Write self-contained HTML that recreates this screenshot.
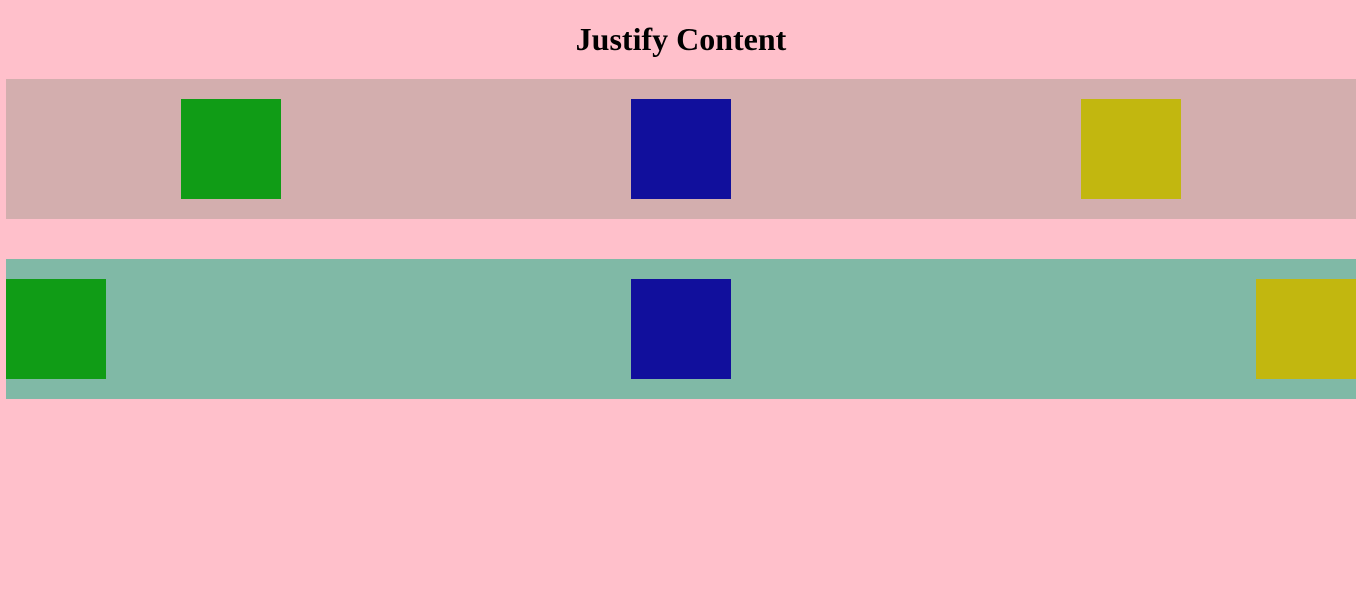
<!DOCTYPE html>
<html><head><style>
html,body{margin:0;padding:0;background:#FFC0CB;width:1362px;height:601px;overflow:hidden}
h1{position:absolute;top:0;left:0;width:1362px;margin:0;text-align:center;font-family:"Liberation Serif",serif;font-size:32px;font-weight:bold;line-height:37px;top:21px}
.c{position:absolute;left:6px;width:1350px;height:140px}
.b{position:absolute;top:20px;width:100px;height:100px}
.g{background:#109C16}.u{background:#110F9C}.y{background:#C2B70F}
</style></head><body>
<h1>Justify Content</h1>
<div class="c" style="top:79px;background:#D3AEAE">
<div class="b g" style="left:175px"></div>
<div class="b u" style="left:625px"></div>
<div class="b y" style="left:1075px"></div>
</div>
<div class="c" style="top:259px;background:#80B9A6">
<div class="b g" style="left:0"></div>
<div class="b u" style="left:625px"></div>
<div class="b y" style="left:1250px"></div>
</div>
</body></html>
